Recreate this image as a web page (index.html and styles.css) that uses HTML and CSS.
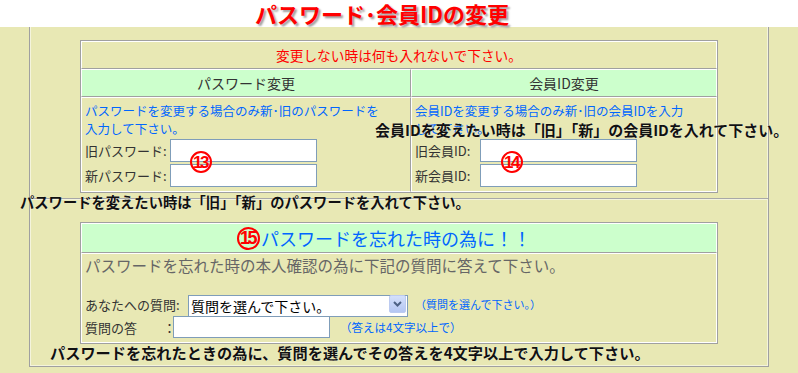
FILE: index.html
```html
<!DOCTYPE html>
<html lang="ja">
<head>
    <meta charset="UTF-8">
    <title>パスワード･会員IDの変更</title>
    <link rel="stylesheet" href="styles.css">
</head>
<body>
    <div class="page-head">
        <h1 class="page-title">パスワード･会員IDの変更</h1>
    </div>

    <div class="frame">
        <div class="panel">
            <div class="cell notice last-col">変更しない時は何も入れないで下さい。</div>
            <div class="cols">
                <div class="cell head">パスワード変更</div>
                <div class="cell head last-col">会員ID変更</div>
                <div class="cell body last-row">
                    <p class="hint">パスワードを変更する場合のみ新･旧のパスワードを<br>入力して下さい。</p>
                    <div class="field">
                        <label class="lbl lbl-pw" for="old-pw">旧パスワード:</label>
                        <input class="txt txt-pw" type="password" id="old-pw">
                    </div>
                    <div class="field">
                        <label class="lbl lbl-pw" for="new-pw">新パスワード:</label>
                        <input class="txt txt-pw" type="password" id="new-pw">
                    </div>
                </div>
                <div class="cell body last-col last-row">
                    <p class="hint">会員IDを変更する場合のみ新･旧の会員IDを入力<br>して下さい。</p>
                    <div class="field">
                        <label class="lbl lbl-id" for="old-id">旧会員ID:</label>
                        <input class="txt txt-id" type="text" id="old-id">
                    </div>
                    <div class="field">
                        <label class="lbl lbl-id" for="new-id">新会員ID:</label>
                        <input class="txt txt-id" type="text" id="new-id">
                    </div>
                </div>
            </div>
        </div>

        <div class="divider"></div>

        <div class="panel">
            <div class="cell head head-big last-col">
                <span class="circle circle-big">15</span>パスワードを忘れた時の為に！！
            </div>
            <div class="cell body body-q last-col last-row">
                <p class="lead">パスワードを忘れた時の本人確認の為に下記の質問に答えて下さい。</p>
                <div class="field field-q">
                    <label class="lbl lbl-q" for="question">あなたへの質問:</label>
                    <div class="select-wrap">
                        <select id="question" class="select">
                            <option>質問を選んで下さい。</option>
                        </select>
                        <span class="select-btn">
                            <svg width="9" height="6" viewBox="0 0 9 6"><path d="M1 1 L4.5 4.5 L8 1" fill="none" stroke="#4d6185" stroke-width="2"/></svg>
                        </span>
                    </div>
                    <span class="small-note">（質問を選んで下さい。）</span>
                </div>
                <div class="field field-q">
                    <label class="lbl lbl-q" for="answer">質問の答　　：</label>
                    <input class="txt txt-answer" type="text" id="answer">
                    <span class="small-note note-answer">（答えは4文字以上で）</span>
                </div>
            </div>
        </div>
    </div>

    <!-- 説明用の書き込み -->
    <div class="memo memo-id">会員IDを変えたい時は「旧」「新」の会員IDを入れて下さい。</div>
    <div class="memo memo-pw">パスワードを変えたい時は「旧」「新」のパスワードを入れて下さい。</div>
    <div class="memo memo-q">パスワードを忘れたときの為に、質問を選んでその答えを4文字以上で入力して下さい。</div>
    <span class="circle mark-13">13</span>
    <span class="circle mark-14">14</span>
</body>
</html>
```

FILE: styles.css
```css
body {
    margin: 0;
    background: #e8e8b4;
    font-family: "Noto Sans CJK JP", sans-serif;
    color: #333;
    position: relative;
    min-height: 373px;
}

.page-head {
    background: #fff;
    height: 27px;
    text-align: center;
    padding-right: 34px;
}

.page-title {
    margin: 0;
    font-size: 22px;
    line-height: 27px;
    font-weight: bold;
    color: #ff0000;
    text-shadow: 2px 2px 2px #a0a0a0;
    white-space: nowrap;
}

.frame {
    margin-left: 29px;
    width: 740px;
    box-sizing: border-box;
    border: 1px solid #a0a0a0;
    border-top: none;
    box-shadow: inset 1px 0 #f4f4dc, inset -1px -1px #f4f4dc;
    padding: 13px 0 22px;
}

.panel {
    width: 638px;
    box-sizing: border-box;
    margin: 0 auto;
    border: 1px solid #a0a0a0;
}

.cell {
    box-sizing: border-box;
    border: 1px solid;
    border-color: #fff #a0a0a0 #a0a0a0 #fff;
}

.cell.last-col {
    border-right-color: #fff;
}

.cell.last-row {
    border-bottom-color: #fff;
}

.notice {
    height: 28px;
    line-height: 26px;
    text-align: center;
    color: #ff0000;
    font-size: 13.7px;
}

.cols {
    display: grid;
    grid-template-columns: 330px 1fr;
}

.head {
    height: 28px;
    line-height: 26px;
    background: #ccffcc;
    text-align: center;
    font-size: 14px;
    color: #333;
}

.body {
    height: 95px;
    padding: 4px 0 0 3px;
}

.hint {
    margin: 0 0 1px;
    font-size: 12.5px;
    line-height: 18px;
    color: #0066ff;
    white-space: nowrap;
}

.field {
    display: flex;
    align-items: center;
    margin-bottom: 2px;
}

.lbl {
    font-size: 13px;
    color: #333;
    white-space: nowrap;
}

.lbl-pw {
    width: 85px;
}

.lbl-id {
    width: 65px;
}

.txt {
    box-sizing: border-box;
    height: 23px;
    border: 1px solid #7f9db9;
    background: #fff;
    margin: 0;
    padding: 0 3px;
}

.txt-pw {
    width: 147px;
}

.txt-id {
    width: 157px;
}

.divider {
    margin: 5px 0 22px;
    border-top: 1px solid #a8a8a8;
    border-bottom: 1px solid #f4f4dc;
}

.head-big {
    height: 30px;
    line-height: 28px;
    font-size: 18px;
    color: #0066ff;
    padding-right: 30px;
    display: flex;
    align-items: center;
    justify-content: center;
}

.body-q {
    height: 90px;
    padding: 1px 0 0 3px;
}

.lead {
    margin: 0 0 18px;
    font-size: 15.5px;
    line-height: 20px;
    color: #666;
    white-space: nowrap;
}

.field-q {
    margin-bottom: 1px;
}

.lbl-q {
    width: 103px;
}

.select-wrap {
    position: relative;
    width: 220px;
    height: 22px;
}

.select {
    appearance: none;
    -webkit-appearance: none;
    box-sizing: border-box;
    width: 100%;
    height: 100%;
    margin: 0;
    border: 1px solid #7f9db9;
    border-radius: 0;
    background: #fff;
    font-family: "Noto Sans CJK JP", sans-serif;
    font-size: 14px;
    color: #000;
    padding: 0 2px;
}

.select-btn {
    position: absolute;
    top: 2px;
    right: 2px;
    width: 15px;
    height: 16px;
    border: 1px solid #bccbf1;
    border-radius: 2px;
    background: linear-gradient(#d4e0fb, #b4c6f3);
    display: flex;
    align-items: center;
    justify-content: center;
}

.small-note {
    margin-left: 7px;
    font-size: 11px;
    color: #0066ff;
    white-space: nowrap;
}

.txt-answer {
    width: 157px;
    height: 22px;
    margin-left: -15px;
}

.note-answer {
    margin-left: 10px;
    font-size: 11.5px;
}

.circle {
    display: inline-flex;
    align-items: center;
    justify-content: center;
    box-sizing: border-box;
    width: 22px;
    height: 22px;
    border: 2px solid #ff0000;
    border-radius: 50%;
    color: #ff0000;
    font-family: "Liberation Sans", sans-serif;
    font-weight: bold;
    font-size: 17px;
    letter-spacing: -2.5px;
    line-height: 1;
    padding-right: 2px;
}

.circle-big {
    width: 23px;
    height: 23px;
    font-size: 18px;
    margin-right: 1px;
}

.mark-13 {
    position: absolute;
    left: 190px;
    top: 151px;
}

.mark-14 {
    position: absolute;
    left: 501px;
    top: 151px;
}

.memo {
    position: absolute;
    font-weight: bold;
    font-size: 15px;
    line-height: 16px;
    color: #111;
    white-space: nowrap;
    text-shadow: 0 0 1px #f6f6e6;
}

.memo-id {
    left: 375px;
    top: 122px;
}

.memo-pw {
    left: 20px;
    top: 194px;
    font-size: 14.3px;
}

.memo-q {
    left: 50px;
    top: 344px;
    font-size: 15.2px;
}
```
